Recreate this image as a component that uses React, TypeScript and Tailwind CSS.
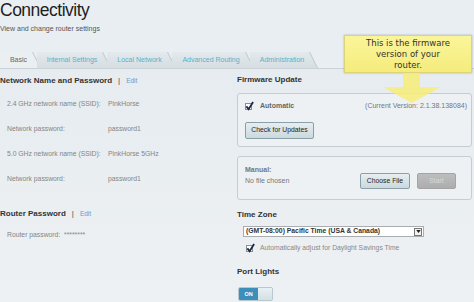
import React from "react";

const tabs = [
  { label: "Basic", w: "w-[41px]", active: true },
  { label: "Internal Settings", w: "w-[74px]" },
  { label: "Local Network", w: "w-[69px]" },
  { label: "Advanced Routing", w: "w-[82px]" },
  { label: "Administration", w: "w-[68px]" },
];

const rows = [
  ["2.4 GHz network name (SSID):", "PinkHorse"],
  ["Network password:", "password1"],
  ["5.0 GHz network name (SSID):", "PinkHorse 5GHz"],
  ["Network password:", "password1"],
];

function Checkbox() {
  return (
    <span className="relative inline-block w-[7px] h-[7px] bg-white border border-[#8a8f94] shrink-0">
      <svg viewBox="0 0 10 10" className="absolute -left-[1px] -top-[3px] w-[9px] h-[10px] overflow-visible">
        <path d="M1.5 5.5 L4 8.5 L9 0.5" fill="none" stroke="#1d2a44" strokeWidth="2" />
      </svg>
    </span>
  );
}

function SectionTitle({ children }: { children: React.ReactNode }) {
  return <div className="text-[8px] leading-[10px] font-bold text-[#333]">{children}</div>;
}

export default function App() {
  return (
    <div className="relative w-[474px] h-[302px] overflow-hidden bg-[#e9eef2] font-['Liberation_Sans',Arial,sans-serif]">
      {/* header */}
      <div className="h-[52px] pt-[1px]">
        <h1 className="text-[17.5px] leading-[18px] tracking-[-0.5px] text-[#1e1e1e]">Connectivity</h1>
        <p className="mt-[6px] text-[7px] leading-[8px] text-[#555]">View and change router settings</p>
      </div>

      {/* tabs */}
      <div className="flex h-[17px] border-b border-[#cbd3d8]">
        {tabs.map((t) => (
          <div
            key={t.label}
            className={`${t.w} -mr-[4px] h-[16px] bg-[#bfc8ce] [clip-path:polygon(0_0,calc(100%-8px)_0,100%_100%,0_100%)]`}
          >
            <div
              className={`h-full flex items-center justify-center pr-[4px] text-[7px] [clip-path:polygon(0_0,calc(100%-9px)_0,calc(100%-1px)_100%,0_100%)] ${
                t.active
                  ? "bg-[#eaeff2] text-[#666]"
                  : "bg-gradient-to-b from-[#e3e9ec] to-[#d6dee3] text-[#55b3c8]"
              }`}
            >
              {t.label}
            </div>
          </div>
        ))}
      </div>

      {/* body */}
      <div className="flex bg-gradient-to-b from-[#e6ecf0] to-[#eef1f3] h-[234px]">
        {/* left column */}
        <div className="w-[237px] pt-[7px]">
          <div className="flex items-center gap-[6px]">
            <SectionTitle>Network Name and Password</SectionTitle>
            <span className="text-[8px] leading-[10px] text-[#444]">|</span>
            <span className="text-[6.5px] text-[#5b9fd8]">Edit</span>
          </div>
          <div className="mt-[6px]">
            {rows.map(([k, v], i) => (
              <div key={i} className="h-[25px] flex items-center pl-[7px] text-[6.8px] text-[#858585]">
                <span className="w-[101px]">{k}</span>
                <span>{v}</span>
              </div>
            ))}
          </div>
          <div className="mt-[17px] flex items-center gap-[6px]">
            <SectionTitle>Router Password</SectionTitle>
            <span className="text-[8px] leading-[10px] text-[#444]">|</span>
            <span className="text-[6.5px] text-[#5b9fd8]">Edit</span>
          </div>
          <div className="mt-[12px] pl-[7px] text-[6.8px] leading-[8px] text-[#858585]">
            Router password:&nbsp; ********
          </div>
        </div>

        {/* right column */}
        <div className="w-[235px] pt-[6px]">
          <SectionTitle>Firmware Update</SectionTitle>
          <div className="mt-[8px] h-[54px] rounded-[3px] border border-[#c6cdd2] bg-[#edf1f4] pl-[7px] pr-[4px] pt-[8px]">
            <div className="flex items-center h-[8px] text-[7px]">
              <Checkbox />
              <span className="ml-[8px] text-[#666] font-bold">Automatic</span>
              <span className="ml-auto text-[#777]">(Current Version: 2.1.38.138084)</span>
            </div>
            <button className="mt-[12px] w-[69px] h-[17px] rounded-[2px] border border-[#8aa0a8] bg-gradient-to-b from-[#e6eef0] to-[#cbd9dd] text-[6.8px] text-[#222]">
              Check for Updates
            </button>
          </div>
          <div className="mt-[9px] h-[44px] rounded-[3px] border border-[#c6cdd2] bg-[#edf1f4] pl-[7px] pr-[15px] flex justify-between">
            <div className="pt-[9px] text-[7px] leading-[8px]">
              <div className="font-bold text-[#777]">Manual:</div>
              <div className="mt-[3px] text-[#777]">No file chosen</div>
            </div>
            <div className="pt-[16px] flex gap-[7px]">
              <button className="w-[50px] h-[16px] rounded-[2px] border border-[#8aa0a8] bg-gradient-to-b from-[#e6eef0] to-[#cbd9dd] text-[6.8px] text-[#222]">
                Choose File
              </button>
              <button className="w-[39px] h-[16px] rounded-[2px] border border-[#a4a4a4] bg-gradient-to-b from-[#bdbdbd] to-[#adadad] text-[6.8px] text-[#d9d9d9]">
                Start
              </button>
            </div>
          </div>

          <div className="mt-[10px]">
            <SectionTitle>Time Zone</SectionTitle>
          </div>
          <div className="mt-[6px] ml-[6px] w-[181px] h-[11px] bg-white border border-[#a9adb0] flex items-center pl-[2px] pr-[1px] text-[6.8px] font-bold text-[#333]">
            <span>(GMT-08:00) Pacific Time (USA &amp; Canada)</span>
            <span className="ml-auto w-[8px] h-[8px] border border-[#777] bg-[#f2f2f2] flex items-center justify-center">
              <svg viewBox="0 0 6 4" className="w-[5px] h-[3px]">
                <path d="M0 0 L6 0 L3 4 Z" fill="#222" />
              </svg>
            </span>
          </div>
          <div className="mt-[7px] ml-[9px] flex items-center h-[8px] text-[6.8px] text-[#888]">
            <Checkbox />
            <span className="ml-[7px]">Automatically adjust for Daylight Savings Time</span>
          </div>

          <div className="mt-[15px]">
            <SectionTitle>Port Lights</SectionTitle>
          </div>
          <div className="mt-[10px] ml-[1px] flex w-[35px] h-[14px] rounded-[2px] overflow-hidden border border-[#b8c8cf]">
            <div className="w-[19px] bg-[#3b8fb8] text-white text-[5.5px] font-bold flex items-center justify-center">ON</div>
            <div className="flex-1 bg-gradient-to-b from-[#e8f0f3] to-[#d3e0e5]" />
          </div>
        </div>
      </div>

      {/* tooltip */}
      <div className="absolute left-[344px] top-[35px] w-[128px] h-[38px] bg-gradient-to-b from-[#fbf59a] to-[#f5ec7c] border border-[#dcd37a] shadow-[0_0_2px_rgba(0,0,0,0.25)] flex flex-col items-center justify-center font-['DejaVu_Sans',Verdana,sans-serif] text-[8.5px] leading-[11px] text-[#333]">
        <span>This is the firmware</span>
        <span>version of your</span>
        <span>router.</span>
      </div>
      <svg className="absolute left-[380px] top-[73px] w-[64px] h-[30px]" viewBox="0 0 64 30">
        <path d="M23 0 H40 V14 H61 L31.5 30 L3 14 H23 Z" fill="#f6ed78" fillOpacity="0.85" />
      </svg>
    </div>
  );
}
